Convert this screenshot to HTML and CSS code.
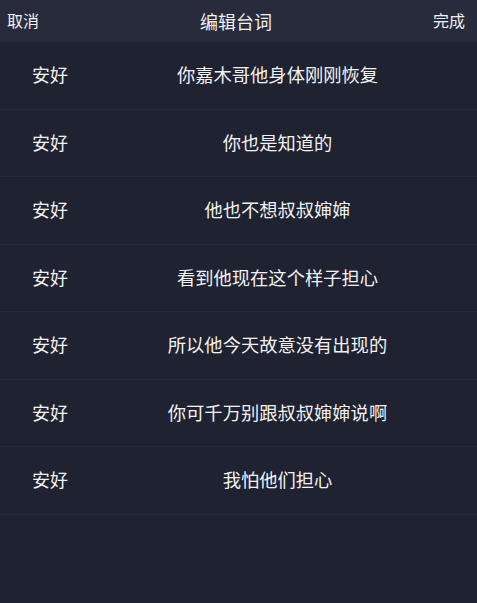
FILE: index.html
```html
<!DOCTYPE html>
<html lang="zh">
<head>
<meta charset="utf-8">
<title>编辑台词</title>
<link rel="stylesheet" href="styles.css">
</head>
<body>
<div class="page">
  <header class="topbar">
    <span class="btn btn-left">取消</span>
    <span class="title">编辑台词</span>
    <span class="btn btn-right">完成</span>
  </header>
  <ul class="lines">
    <li class="line"><span class="role">安好</span><span class="text">你嘉木哥他身体刚刚恢复</span></li>
    <li class="line"><span class="role">安好</span><span class="text">你也是知道的</span></li>
    <li class="line"><span class="role">安好</span><span class="text">他也不想叔叔婶婶</span></li>
    <li class="line"><span class="role">安好</span><span class="text">看到他现在这个样子担心</span></li>
    <li class="line"><span class="role">安好</span><span class="text">所以他今天故意没有出现的</span></li>
    <li class="line"><span class="role">安好</span><span class="text">你可千万别跟叔叔婶婶说啊</span></li>
    <li class="line"><span class="role">安好</span><span class="text">我怕他们担心</span></li>
  </ul>
</div>
</body>
</html>
```
FILE: styles.css
```css
html, body {
  margin: 0;
  padding: 0;
  background: #1f2230;
}
body {
  font-family: "Noto Sans CJK SC", "Noto Sans", sans-serif;
  color: #f2f2f4;
}
.page {
  width: 477px;
  height: 603px;
  background: #1f2230;
  overflow: hidden;
}
.topbar {
  height: 42px;
  background: #272b3b;
  display: grid;
  grid-template-columns: 1fr auto 1fr;
  align-items: center;
  padding: 0 12px 0 7px;
}
.btn {
  font-size: 16px;
  line-height: 20px;
  padding-bottom: 2px;
}
.btn-right {
  justify-self: end;
}
.title {
  font-size: 18px;
  line-height: 22px;
}
.lines {
  list-style: none;
  margin: 0;
  padding: 0;
}
.line {
  box-sizing: border-box;
  height: 67.5px;
  border-bottom: 1.5px solid #282b3a;
  display: flex;
  align-items: center;
  padding-bottom: 2px;
}
.role {
  width: 78px;
  box-sizing: border-box;
  padding-left: 32px;
  font-size: 18px;
  flex: none;
}
.text {
  flex: 1;
  text-align: center;
  font-size: 18.3px;
}
```
